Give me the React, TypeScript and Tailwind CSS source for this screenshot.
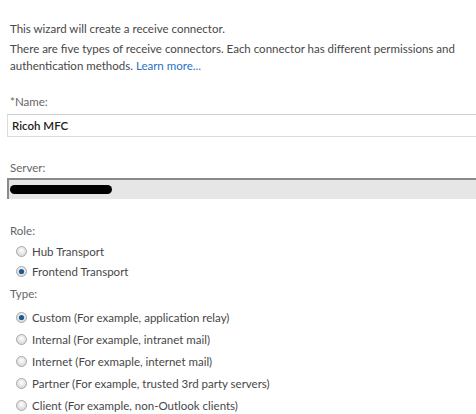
const font = { fontFamily: "Lato, 'Open Sans', sans-serif" };

function Radio({ checked }: { checked?: boolean }) {
  return (
    <svg width="11" height="11" viewBox="0 0 11 11" className="shrink-0">
      <defs>
        <radialGradient id={checked ? "rg-on" : "rg-off"} cx="50%" cy="40%" r="60%">
          <stop offset="0%" stopColor="#ffffff" />
          <stop offset="100%" stopColor="#d4d4d4" />
        </radialGradient>
      </defs>
      <circle cx="5.5" cy="5.5" r="5" fill={`url(#${checked ? "rg-on" : "rg-off"})`} stroke="#a9a9a9" strokeWidth="1" />
      {checked ? <circle cx="5.5" cy="5.5" r="2.6" fill="#1c5a96" /> : null}
    </svg>
  );
}

function Option({ label, checked, h = 22 }: { label: string; checked?: boolean; h?: number }) {
  return (
    <div className="flex items-center gap-[5px] pl-[6px]" style={{ height: h }}>
      <Radio checked={checked} />
      <span className="text-[#474747]">{label}</span>
    </div>
  );
}

export default function App() {
  return (
    <div
      className="h-[414px] w-[476px] overflow-hidden bg-white pl-[10px] pt-[20px] text-[11.5px] leading-[17px] text-[#474747]"
      style={font}
    >
      <p>This wizard will create a receive connector.</p>
      <p className="mt-[3px] pr-[8px]">
        There are five types of receive connectors. Each connector has different permissions and
        authentication methods. <a className="text-[#2a72c6]">Learn more...</a>
      </p>

      <p className="mt-[19px] text-[#666]">*Name:</p>
      <div className="-ml-[3px] -mr-[20px] mt-[4px] flex h-[23px] items-center border border-[#dcdcdc] border-t-[#cfcfcf] pl-[4px] font-semibold text-[#222]">
        Ricoh MFC
      </div>

      <p className="mt-[22px] text-[#666]">Server:</p>
      <div className="-ml-[3px] -mr-[20px] mt-[2px] flex h-[21px] items-center border-l-[2px] border-t-[2px] border-[#8a8a8a] bg-[#e6e6e6] pl-[1px]">
        <div className="h-[9px] w-[102px] rounded-full bg-black" />
      </div>

      <p className="mt-[23px] text-[#666]">Role:</p>
      <div className="mt-[2px]">
        <Option label="Hub Transport" h={20} />
        <Option label="Frontend Transport" checked h={20} />
      </div>

      <p className="mt-[4px] text-[#666]">Type:</p>
      <div className="mt-[4px]">
        <Option label="Custom (For example, application relay)" checked />
        <Option label="Internal (For example, intranet mail)" />
        <Option label="Internet (For exmaple, internet mail)" />
        <Option label="Partner (For example, trusted 3rd party servers)" />
        <Option label="Client (For example, non-Outlook clients)" />
      </div>
    </div>
  );
}
